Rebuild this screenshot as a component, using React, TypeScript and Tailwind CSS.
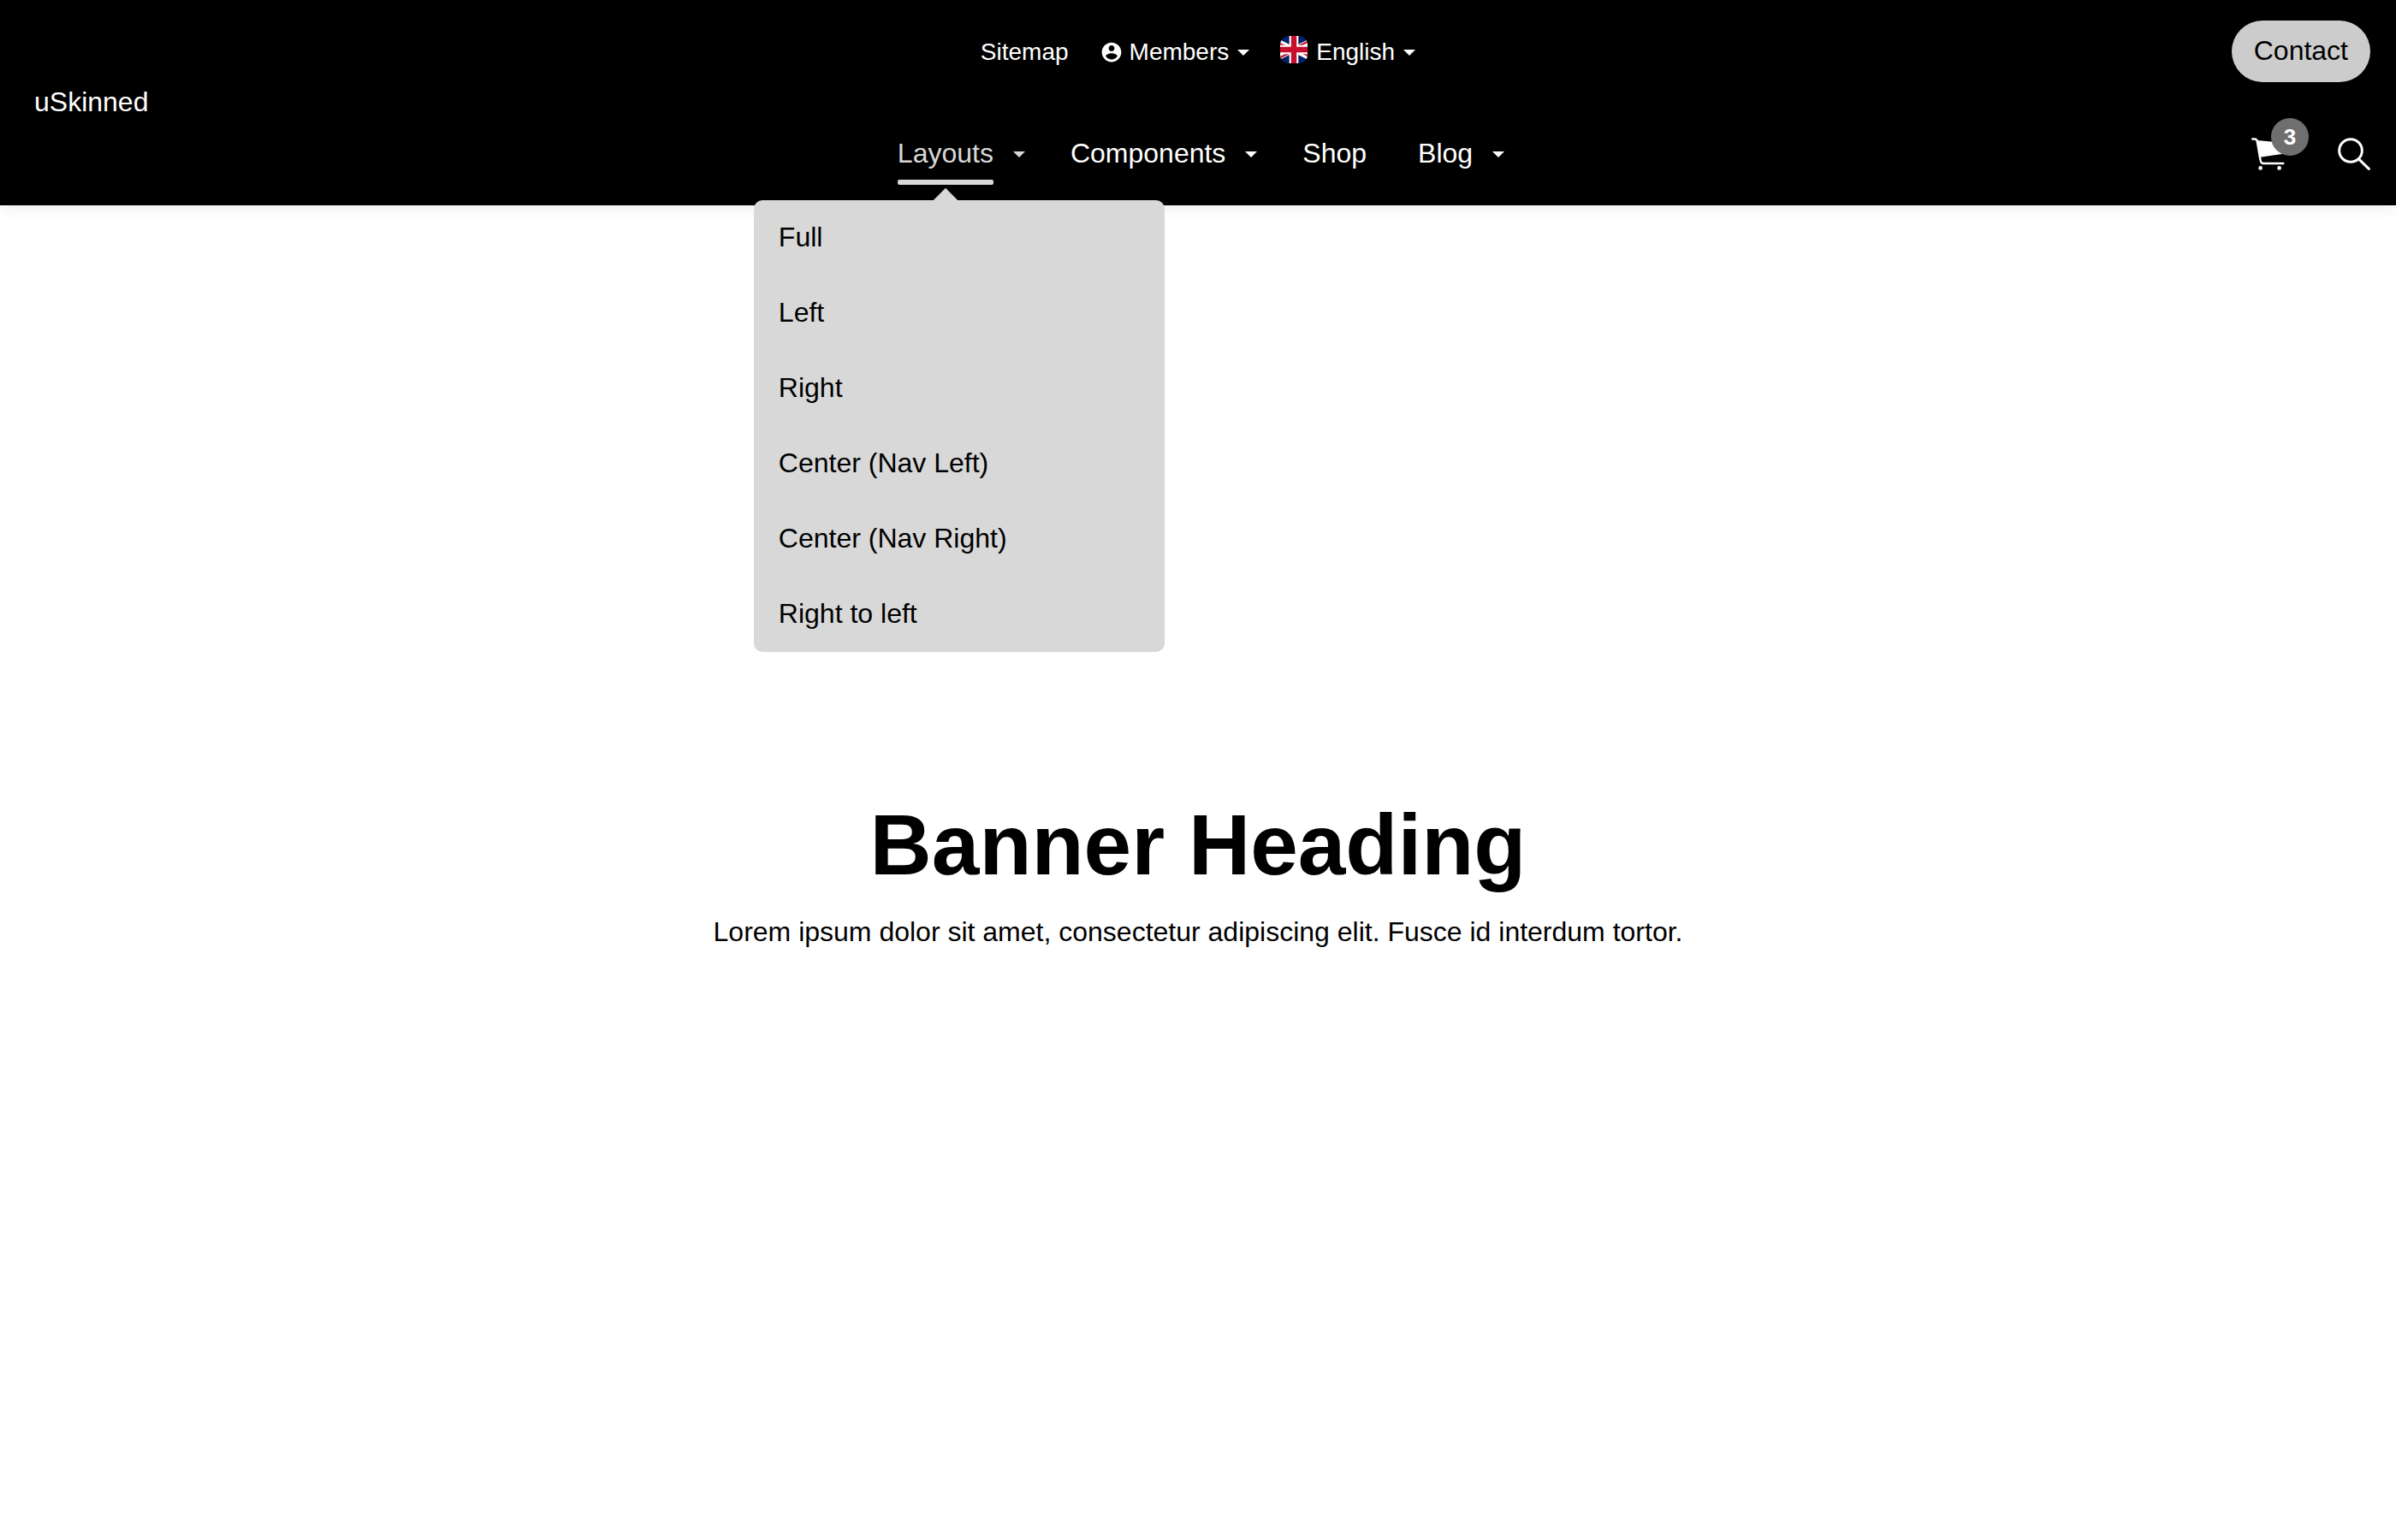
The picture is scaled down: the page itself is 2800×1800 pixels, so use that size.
import { IoMdContact } from "react-icons/io";

const layouts = [
  "Full",
  "Left",
  "Right",
  "Center (Nav Left)",
  "Center (Nav Right)",
  "Right to left",
];

function Caret() {
  return (
    <svg aria-hidden="true" viewBox="0 0 14 7" className="h-[7px] w-[14px] shrink-0 fill-current">
      <path d="M0 0h14L7 7z" />
    </svg>
  );
}

function Flag() {
  return (
    <svg aria-hidden="true" viewBox="15 0 30 30" className="mb-1.5 size-8 shrink-0 rounded-[10px]">
      <clipPath id="saltire">
        <path d="M30 15h30v15zv15H0zH0V0zV0h30z" />
      </clipPath>
      <path fill="#012169" d="M0 0h60v30H0z" />
      <path stroke="#fff" strokeWidth="6" d="m0 0 60 30M60 0 0 30" />
      <path stroke="#c8102e" strokeWidth="4" clipPath="url(#saltire)" d="m0 0 60 30M60 0 0 30" />
      <path stroke="#fff" strokeWidth="10" d="M30 0v30M0 15h60" />
      <path stroke="#c8102e" strokeWidth="6" d="M30 0v30M0 15h60" />
    </svg>
  );
}

function CartIcon() {
  return (
    <svg aria-hidden="true" viewBox="0 0 512 512" className="size-[50px] fill-current">
      <path d="m119 92 329 32-15 129-276 41z" />
      <path
        d="M64 76h26c18 0 26 6 30 26l38 220c6 36 12 47 38 47h237"
        fill="none"
        stroke="currentColor"
        strokeWidth="25"
        strokeLinecap="round"
      />
      <circle cx="160" cy="424" r="24" />
      <circle cx="385" cy="424" r="24" />
    </svg>
  );
}

function SearchIcon() {
  return (
    <svg
      aria-hidden="true"
      viewBox="0 0 114 114"
      fill="none"
      stroke="currentColor"
      strokeWidth="9"
      strokeLinecap="round"
      className="size-[38px]"
    >
      <circle cx="45" cy="45" r="40" />
      <path d="m75 76 34 33" />
    </svg>
  );
}

function NavItem({ label }: { label: string }) {
  return (
    <li className="flex items-center px-[30px]">
      <a href="#" className="pt-[19px] pb-[21px]">
        {label}
      </a>
      <button type="button" aria-label={`Expand ${label}`} className="-mr-[7px] ml-[23px]">
        <Caret />
      </button>
    </li>
  );
}

export default function App() {
  return (
    <div className="min-h-screen bg-white font-['Liberation_Sans',Arial,sans-serif] text-[32px] leading-[48px] text-black">
      <header className="relative z-10 grid grid-cols-[1fr_auto_1fr] items-center bg-black px-[30px] text-white shadow-[0_0_20px_rgba(0,0,0,0.1)]">
        <a href="#" className="justify-self-start px-[10px] pt-[19px] pb-[21px]">
          uSkinned
        </a>

        <div className="flex flex-col items-center">
          <ul className="flex h-[120px] items-center gap-[36px] pt-0.5 text-[28px] leading-[42px]">
            <li>
              <a href="#">Sitemap</a>
            </li>
            <li>
              <button type="button" className="flex items-center gap-[10px]">
                <span className="flex items-center gap-[7px]">
                  <IoMdContact aria-hidden="true" className="size-7" />
                  Members
                </span>
                <Caret />
              </button>
            </li>
            <li>
              <button type="button" className="flex items-center gap-[10px]">
                <Flag />
                English
                <Caret />
              </button>
            </li>
          </ul>

          <nav aria-label="Main">
            <ul className="flex h-[120px] items-center">
              <li className="flex items-center px-[30px] text-[#d8d8d8]">
                <div className="relative">
                  <a href="#" className="block pt-[19px] pb-[21px]">
                    Layouts
                  </a>
                  <span className="absolute inset-x-0 bottom-2 h-[6px] rounded-[2px] bg-[#d8d8d8]" />
                  <div className="absolute top-[98px] -left-[168px] w-[480px] rounded-[10px] bg-[#d8d8d8] text-black">
                    <span className="absolute -top-[10px] left-[214px] size-5 rotate-45 bg-[#d8d8d8]" />
                    <ul>
                      {layouts.map((name) => (
                        <li key={name}>
                          <a href="#" className="relative block px-[29px] pt-[19px] pb-[21px]">
                            {name}
                          </a>
                        </li>
                      ))}
                    </ul>
                  </div>
                </div>
                <button type="button" aria-label="Collapse Layouts" className="-mr-[7px] ml-[23px]">
                  <Caret />
                </button>
              </li>
              <NavItem label="Components" />
              <li className="px-[30px]">
                <a href="#" className="block pt-[19px] pb-[21px]">
                  Shop
                </a>
              </li>
              <NavItem label="Blog" />
            </ul>
          </nav>
        </div>

        <div className="flex flex-col items-end">
          <div className="flex h-[120px] items-center">
            <a href="#" className="rounded-full bg-[#ccc] px-[26px] pt-[11px] pb-[13px] text-black">
              Contact
            </a>
          </div>
          <div className="flex h-[120px] items-center gap-[56px]">
            <a href="#" aria-label="Shopping cart, 3 items" className="relative">
              <CartIcon />
              <span className="absolute -top-[17px] left-[28px] flex size-11 items-center justify-center rounded-full bg-[#6f6f6f] text-[26px] leading-none font-bold">
                3
              </span>
            </a>
            <button type="button" aria-label="Search">
              <SearchIcon />
            </button>
          </div>
        </div>
      </header>

      <main className="px-[30px] pt-[687px] text-center">
        <h1 className="text-[100px] leading-[120px] font-bold">Banner Heading</h1>
        <p className="mt-[18px]">
          Lorem ipsum dolor sit amet, consectetur adipiscing elit. Fusce id interdum tortor.
        </p>
      </main>
    </div>
  );
}
